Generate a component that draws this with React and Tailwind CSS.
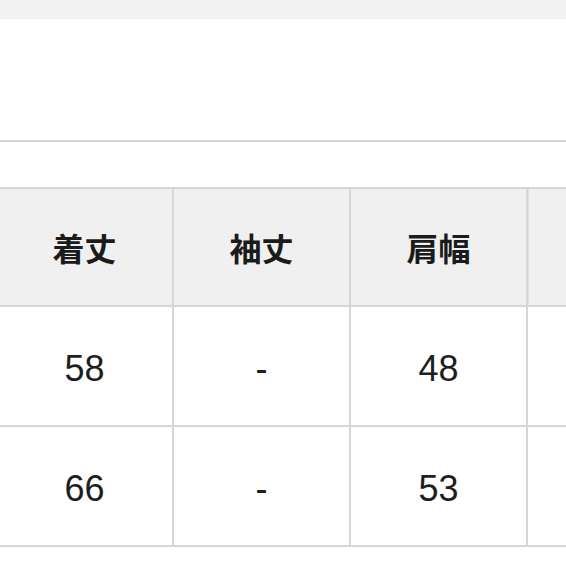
const headers = ['着丈', '袖丈', '肩幅', '']
const rows = [
  ['58', '-', '48', ''],
  ['66', '-', '53', ''],
]

export default function App() {
  return (
    <div className="w-[566px] h-[566px] overflow-hidden bg-white font-['Liberation_Sans','Noto_Sans_CJK_JP',sans-serif]">
      <div className="h-[19px] bg-[#f2f2f2]" />
      <div className="h-[121px]" />
      <div className="h-[2px] bg-[#d4d4d4]" />
      <div className="h-[45px]" />

      <div className="-ml-[3px] w-[720px] border-t-2 border-[#d6d6d6]">
        <div className="flex bg-[#f0f0f0] border-b-2 border-[#d6d6d6]">
          {headers.map((h, i) => (
            <div
              key={i}
              className={`w-[177px] h-[116px] shrink-0 flex items-center justify-center border-r-2 border-[#d6d6d6] text-[32px] font-bold text-[#1b1b1b] font-['Noto_Sans_CJK_JP',sans-serif] ${i === 3 ? 'border-l border-l-[#e0e0e0]' : ''}`}
            >
              {h}
            </div>
          ))}
        </div>
        {rows.map((r, ri) => (
          <div key={ri} className="flex border-b-2 border-[#d6d6d6]">
            {r.map((c, i) => (
              <div
                key={i}
                className="w-[177px] h-[118px] shrink-0 flex items-center justify-center border-r-2 border-[#d6d6d6] text-[36px] text-[#1e1e1e] pt-[6px]"
              >
                {c}
              </div>
            ))}
          </div>
        ))}
      </div>
    </div>
  )
}
